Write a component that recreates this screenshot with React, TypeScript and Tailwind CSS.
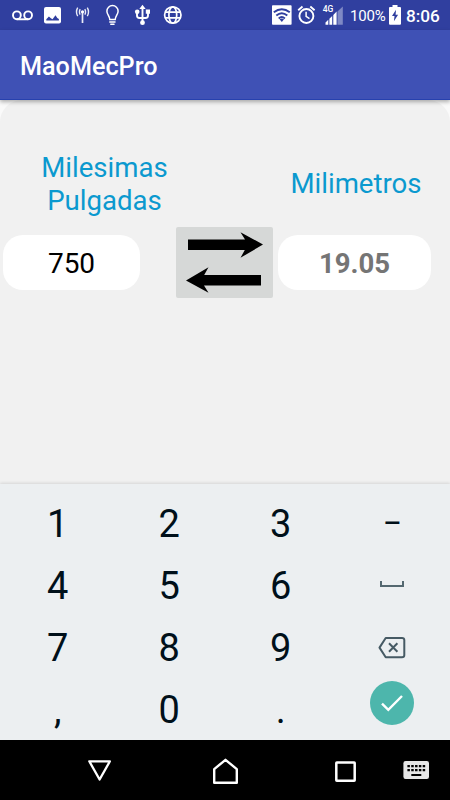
import type { ReactNode } from "react";

function Glyph({ box, className, children }: { box: string; className?: string; children: ReactNode }) {
  const [, , w, h] = box.split(" ");
  return (
    <svg viewBox={box} width={w} height={h} fill="none" className={"shrink-0 " + (className ?? "")}>
      {children}
    </svg>
  );
}

function StatusBar() {
  return (
    <div className="flex h-[30px] items-center bg-[#303f9f] text-white">
      {/* voicemail */}
      <Glyph box="12 0 21 30" className="ml-3">
        <circle cx="16.9" cy="15.3" r="3.9" stroke="#fff" strokeWidth="1.9" />
        <circle cx="28.1" cy="15.3" r="3.9" stroke="#fff" strokeWidth="1.9" />
        <path d="M16.9 19.3h11.2" stroke="#fff" strokeWidth="1.9" />
      </Glyph>
      {/* picture */}
      <Glyph box="44 0 17 30" className="ml-[11px]">
        <rect x="44" y="7" width="17" height="16.6" rx="2" fill="#fff" />
        <path d="M46.3 20.5v-1.3l2.6-2.8 2 1.8 1.6 1 3-4 1.8 2.8 1.6 1v1.5z" fill="#303f9f" />
      </Glyph>
      {/* antenna */}
      <Glyph box="75 0 15 30" className="ml-[14px]">
        <g stroke="#e9ebf7" strokeWidth="1.4">
          <path d="M82.5 12v11" strokeWidth="1.7" />
          <circle cx="82.5" cy="11.8" r="1.6" fill="#fff" stroke="none" />
          <path d="M80.2 9.2q-1.5 2.7 0 5.4M84.8 9.2q1.5 2.7 0 5.4M77.7 7.7q-2.4 4.2 0 8.4M87.3 7.7q2.4 4.2 0 8.4" />
        </g>
      </Glyph>
      {/* bulb */}
      <Glyph box="105 0 15 30" className="ml-[15px]">
        <g stroke="#fff" strokeWidth="1.5" strokeLinecap="round">
          <path d="M109.8 19.5c0-3.2-2.9-5-2.9-8.3a5.6 5.6 0 0 1 11.2 0c0 3.3-2.9 5.1-2.9 8.3z" />
          <path d="M109.8 22h5.2M110.8 24.3h3.2" />
        </g>
      </Glyph>
      {/* usb */}
      <Glyph box="134 0 17 30" className="ml-[14px]">
        <path d="M142.5 8v15M137 12v3.5q0 2.5 2.5 2.5h6q2.5 0 2.5-2.5V12" stroke="#fff" strokeWidth="1.9" />
        <path d="M142.5 4.8l3.2 4.3h-6.4zM145.8 9.5h4.2v4.2h-4.2z" fill="#fff" />
        <circle cx="137.2" cy="11.7" r="2.3" fill="#fff" />
        <circle cx="142.5" cy="22.7" r="2.4" fill="#fff" />
      </Glyph>
      {/* globe */}
      <Glyph box="163 0 20 30" className="ml-3">
        <g stroke="#fff" strokeWidth="1.7">
          <circle cx="172.8" cy="15" r="8.2" />
          <ellipse cx="172.8" cy="15" rx="3.9" ry="8.2" />
          <path d="M165 12.1h15.6M165 17.9h15.6" />
        </g>
      </Glyph>

      {/* wifi */}
      <Glyph box="272 0 20 30" className="ml-auto">
        <rect x="272" y="5.2" width="19.6" height="19.6" rx="0.8" fill="#fff" />
        <g stroke="#303f9f" strokeWidth="1.9">
          <path d="M273.8 12.3q8-6.2 16 0M276.3 15.5q5.5-4.6 11 0M278.7 18.4q3.1-2.6 6.2 0" />
        </g>
        <path d="M279.6 19.3q2.2-1.5 4.4 0l-2.2 2.6z" fill="#303f9f" />
      </Glyph>
      {/* alarm */}
      <Glyph box="297 0 19 30" className="ml-[5px]">
        <g stroke="#fff" strokeWidth="1.9">
          <circle cx="306.4" cy="16" r="7" />
          <path d="M298.2 10.2l4.3-3.6M314.6 10.2l-4.3-3.6" />
          <path d="M306.1 11.7v4.7l3.4 2.2" strokeWidth="1.5" />
        </g>
      </Glyph>
      {/* mobile signal */}
      <Glyph box="322 0 22 30" className="ml-[6px]">
        <text x="322.8" y="12" fontSize="8.8" fontWeight="500" fill="#fff" fontFamily="Roboto, sans-serif" textLength="10.6" lengthAdjust="spacingAndGlyphs">4G</text>
        <path d="M325.5 24.7v-2.2l2.8-2.8v5zM329.4 24.7v-6l2.8-2.8v8.8zM333.3 24.7v-9.8l3.3-3.3v13.1z" fill="#fff" />
        <path d="M337.5 24.7V11.5l5.3-5v18.2z" fill="#7f89c5" />
      </Glyph>
      <span className="ml-[6px] w-[38px] pt-px text-[15px] leading-[30px] tracking-[-0.15px]">100%</span>
      {/* battery */}
      <Glyph box="389 0 12 30" className="ml-[1px]">
        <path d="M392.5 5h5v2h2.5q1 0 1 1v15.8q0 1-1 1h-10q-1 0-1-1V8q0-1 1-1h2.5z" fill="#fff" />
        <path d="M396 9.8l-4 6.3h2.5l-.6 5.2 4.2-6.5h-2.5z" fill="#303f9f" />
      </Glyph>
      <span className="ml-[5px] w-11 pt-px text-[17.2px] font-medium leading-[30px]">8:06</span>
    </div>
  );
}

function Arrow({ className }: { className?: string }) {
  return (
    <svg viewBox="0 0 76 28" width="76" height="28" className={className}>
      <path d="M0 8.6h57L52.5 1.2 75 13.5 52.5 26.8 56.8 19H0z" fill="#000" />
    </svg>
  );
}

function Converter() {
  return (
    <div className="h-[384px] bg-[#fafafa]">
      <div className="h-full rounded-t-[22px] bg-[#f1f1f1] text-[28px] leading-[32.5px]">
        <div className="flex h-[127px] items-center pt-[42px] text-[#0b99cf]">
          <div className="ml-[30px] w-[149px] text-center">
            <div className="text-[27.6px]">Milesimas</div>
            <div className="text-[27.6px]">Pulgadas</div>
          </div>
          <div className="ml-[99px] w-[156px] text-center text-[27.6px]">Milimetros</div>
        </div>
        <div className="flex h-[71px] items-center">
          <div className="ml-[3px] flex h-[55px] w-[137px] items-center justify-center rounded-[20px] bg-white pt-[4px] text-black">750</div>
          <div className="ml-9 flex h-[71px] w-[97px] flex-col rounded-[2px] bg-[#d6d8d7] pt-1">
            <Arrow className="ml-3" />
            <Arrow className="ml-[9px] mt-[7px] rotate-180" />
          </div>
          <div className="ml-[5px] flex h-[55px] w-[153px] items-center justify-center rounded-[20px] bg-white pt-[4px] text-[27.5px] font-bold text-[#757575]">19.05</div>
        </div>
      </div>
    </div>
  );
}

function Key({ children }: { children: ReactNode }) {
  return <div className="flex items-center justify-center">{children}</div>;
}

function Keypad() {
  return (
    <div className="grid h-[256px] grid-cols-4 grid-rows-[62px_62px_62px_62px] bg-[#eceff1] px-[2px] pt-[9px] text-[38px] leading-[62px] text-[#00101a] shadow-[0_-1px_3px_rgba(0,0,0,0.12)]">
      <Key>1</Key>
      <Key>2</Key>
      <Key>3</Key>
      <Key><span className="text-[28px] font-medium">–</span></Key>
      <Key>4</Key>
      <Key>5</Key>
      <Key>6</Key>
      <Key>
        <Glyph box="0 0 24 6" className="mb-[4px]">
          <path d="M1 0v5h22V0" stroke="#546870" strokeWidth="2" />
        </Glyph>
      </Key>
      <Key>7</Key>
      <Key>8</Key>
      <Key>9</Key>
      <Key>
        <Glyph box="0 0 28 22">
          <path d="M7.7 1H24q2.3 0 2.3 2v15.2q0 2-2.3 2H7.7L1.5 10.6z" stroke="#465a64" strokeWidth="2" strokeLinejoin="round" />
          <path d="M11 6.3l8.4 8.4M19.4 6.3L11 14.7" stroke="#465a64" strokeWidth="2" />
        </Glyph>
      </Key>
      <Key>,</Key>
      <Key>0</Key>
      <Key>.</Key>
      <Key>
        <div className="mb-[15px] flex h-11 w-11 items-center justify-center rounded-full bg-[#4db6ac]">
          <Glyph box="0 0 22 18">
            <path d="M1 9.7l6.3 6.2L21 2" stroke="#fff" strokeWidth="2.4" />
          </Glyph>
        </div>
      </Key>
    </div>
  );
}

function NavBar() {
  return (
    <div className="flex h-[60px] items-center bg-black">
      <Glyph box="87 740 25 60" className="ml-[87px]">
        <path d="M89.3 761.3h20.6l-10.3 18.2z" stroke="#fff" strokeWidth="2.3" strokeLinejoin="round" />
      </Glyph>
      <Glyph box="212 740 27 60" className="ml-[100px]">
        <path d="M214.2 782.7v-13.5l11.3-9.4 11.3 9.4v13.5z" stroke="#fff" strokeWidth="2.4" strokeLinejoin="round" />
      </Glyph>
      <Glyph box="334 740 23 60" className="ml-[95px]">
        <rect x="336.3" y="762.4" width="18.4" height="18.4" stroke="#fff" strokeWidth="2.5" rx="0.5" />
      </Glyph>
      <Glyph box="403 740 27 60" className="ml-[46px]">
        <rect x="403.4" y="761" width="25.6" height="18" rx="2.2" fill="#e6e6e6" />
        <path d="M407.4 766.2h17.8M407.4 770.2h17.8" stroke="#000" strokeWidth="2.3" strokeDasharray="2.5 1.32" />
        <path d="M411.3 775h10" stroke="#000" strokeWidth="2" />
      </Glyph>
    </div>
  );
}

export default function App() {
  return (
    <div className="h-[800px] w-[450px] overflow-hidden font-['Roboto',sans-serif]">
      <StatusBar />
      <div className="relative z-10 flex h-[70px] items-center border-b border-[#2741ae] bg-[#3f51b5] pl-5 pt-[5px] text-[25.2px] font-medium text-white shadow-[0_2px_4px_rgba(0,0,0,0.3)]">
        MaoMecPro
      </div>
      <Converter />
      <div className="relative">
        <Keypad />
      </div>
      <NavBar />
    </div>
  );
}
